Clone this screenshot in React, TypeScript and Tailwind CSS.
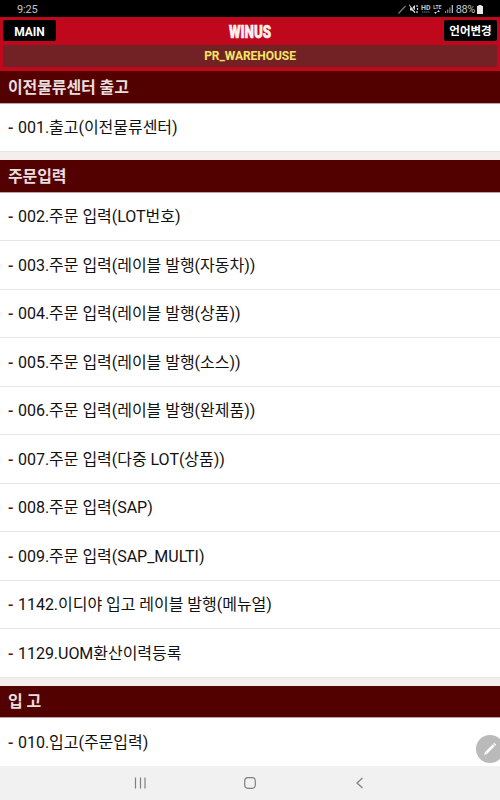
import { clsx } from 'clsx'

const sections = [
	{ title: '이전물류센터 출고', items: ['001.출고(이전물류센터)'] },
	{
		title: '주문입력',
		items: [
			'002.주문 입력(LOT번호)',
			'003.주문 입력(레이블 발행(자동차))',
			'004.주문 입력(레이블 발행(상품))',
			'005.주문 입력(레이블 발행(소스))',
			'006.주문 입력(레이블 발행(완제품))',
			'007.주문 입력(다중 LOT(상품))',
			'008.주문 입력(SAP)',
			'009.주문 입력(SAP_MULTI)',
			'1142.이디야 입고 레이블 발행(메뉴얼)',
			'1129.UOM환산이력등록',
		],
	},
	{ title: '입 고', items: ['010.입고(주문입력)'] },
]

const StatusBar = () => (
	<div className="flex h-[17px] shrink-0 items-center justify-between bg-black pl-[17px] pr-[17px] text-[#c4c4c4]">
		<span className="pt-px text-[11px] leading-none tracking-[-0.2px]">9:25</span>

		<div className="flex items-center pt-px">
			{/* PEN */}
			<svg className="mr-[3px] h-[9px] w-[8px]" viewBox="0 0 8 9">
				<path d="M.5 8.500L7.500 1" stroke="#777" strokeWidth="1.3" />
			</svg>

			{/* MUTE */}
			<svg className="mr-[2px] h-[10px] w-[10px]" viewBox="0 0 10 10">
				<path d="M1 3.500h2L6 1v8L3 6.500H1z" fill="#d5d5d5" />
				<path d="M1 .5l6 8" stroke="#000" strokeWidth="1" />
				<path d="M0 .5l6 8.500" stroke="#d5d5d5" strokeWidth="1" />
				<path d="M8 1v2M8.500 4v2M8 7v2" stroke="#d5d5d5" strokeWidth="1.2" />
			</svg>

			<span className="flex w-[10px] flex-col items-center">
				<span className="text-[7px] font-bold leading-[6px]">HD</span>
				<svg className="h-[2px] w-[8px]" viewBox="0 0 8 2">
					<path d="M0 1h8" stroke="#777" strokeWidth="1.2" strokeDasharray="1.500 .5" />
				</svg>
			</span>

			<span className="ml-[2px] flex w-[9px] flex-col items-center">
				<span className="text-[5px] font-bold leading-[5px]">LTE</span>
				<svg className="h-[4px] w-[6px]" viewBox="0 0 6 4">
					<path d="M0 2h3L1.500 4zM3 2h3L4.500 0z" fill="#d5d5d5" />
				</svg>
			</span>

			{/* SIGNAL */}
			<svg className="ml-[3px] h-[8px] w-[8px]" viewBox="0 0 8 8">
				<path d="M.5 8V6M2.700 8V4.500M4.900 8V2.500" stroke="#888" strokeWidth="1.2" />
				<path d="M7.300 8V0" stroke="#c4c4c4" strokeWidth="1.2" />
			</svg>

			<span className="ml-[3px] text-[11px] leading-none tracking-[-0.4px]">88%</span>

			{/* BATTERY */}
			<svg className="ml-[2px] h-[9px] w-[6px]" viewBox="0 0 6 9">
				<path d="M0 1h1.500V0h3v1H6v8H0z" fill="#e8e8e8" />
			</svg>
		</div>
	</div>
)

const Header = () => (
	<div className="flex h-[54px] shrink-0 flex-col bg-[#c0081c] px-[3px] pt-[3px]">
		<div className="flex items-center justify-between">
			<div className="flex h-[21px] w-[53px] items-center justify-center rounded-[2px] bg-black pt-[3px] text-[12px] font-bold text-white">
				MAIN
			</div>

			<h1 className="scale-x-[0.7] pt-px text-[19px] font-black leading-none text-[#fff0f0] [-webkit-text-stroke:0.7px_#fff0f0]">
				WINUS
			</h1>

			<div className="flex h-[21px] w-[53px] items-center justify-center rounded-[2px] bg-black pt-[3px] text-[11.500px] font-bold text-white">
				언어변경
			</div>
		</div>

		<div className="mt-[4px] flex h-[22px] items-center justify-center rounded-[2px] bg-[#722124] text-[12px] font-bold tracking-[-0.05px] text-[#f5e664]">
			PR_WAREHOUSE
		</div>
	</div>
)

const NavigationBar = () => (
	<div className="grid h-[34px] shrink-0 grid-cols-[repeat(3,110px)] items-center justify-center justify-items-center bg-[#f1f1f1] text-[#808080]">
		<svg className="h-[12px] w-[12px]" viewBox="0 0 12 12">
			<path d="M1.500 .5v11M6.500 .5v11M11 .5v11" stroke="currentColor" strokeWidth="1.2" />
		</svg>

		<svg className="h-[12px] w-[12px]" viewBox="0 0 12 12" fill="none">
			<rect x=".7" y=".7" width="10.600" height="10.600" rx="3.200" stroke="currentColor" strokeWidth="1.2" />
		</svg>

		<svg className="h-[12px] w-[12px]" viewBox="0 0 12 12" fill="none">
			<path d="M8.500 1L3 6l5.500 5" stroke="currentColor" strokeWidth="1.3" />
		</svg>
	</div>
)

export default function App() {
	return (
		<div className="relative flex h-[800px] w-[500px] flex-col overflow-hidden bg-white font-['Roboto','Noto_Sans_CJK_KR',sans-serif]">
			<StatusBar />
			<Header />

			<div className="min-h-0 flex-1 overflow-hidden bg-[#f6eeec]">
				{sections.map((section, i) => (
					<section key={section.title} className={clsx(i > 0 && 'mt-[8px]')}>
						<h2 className="flex h-[32.500px] items-center border-b border-[#b8a5a5] bg-[#530000] px-2 pt-[2px] text-[16px] font-bold tracking-[-0.1px] text-[#e8dede]">
							{section.title}
						</h2>

						<ul>
							{section.items.map((item) => (
								<li
									key={item}
									className="flex h-[48.500px] items-center border-b border-[#e6e6e6] bg-white px-2 pt-[2px] text-[16px] tracking-[-0.03px] text-[#111]"
								>
									<span className="w-[10px] shrink-0 font-medium text-[#5c1010]">-</span>
									{item}
								</li>
							))}
						</ul>
					</section>
				))}
			</div>

			<NavigationBar />

			{/* FLOATING PEN */}
			<div className="absolute left-[476px] top-[735px] flex size-[28px] items-center justify-center rounded-full bg-[#bababa]">
				<svg className="size-[14px]" viewBox="0 0 14 14" fill="none">
					<path d="M3.500 10.500L10.800 3.200" stroke="#fff" strokeWidth="2.600" />
					<path d="M1 13l1.300-3.500 2.200 2.200zM10.300 1.800l1.900 1.900 1-1-1.900-1.900z" fill="#fff" />
				</svg>
			</div>
		</div>
	)
}
